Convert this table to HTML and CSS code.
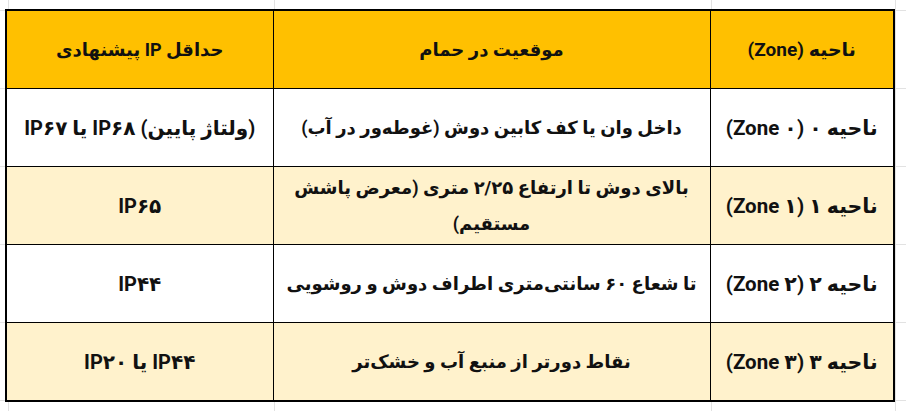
FILE: index.html
```html
<!DOCTYPE html>
<html lang="fa" dir="rtl">
<head>
<meta charset="utf-8">
<link rel="stylesheet" href="styles.css">
</head>
<body>
<div class="sheet">
<table class="zones">
  <colgroup>
    <col class="c-zone">
    <col class="c-loc">
    <col class="c-ip">
  </colgroup>
  <thead>
    <tr class="head">
      <th class="zone">ناحیه (Zone)</th>
      <th class="loc">موقعیت در حمام</th>
      <th class="ip">حداقل IP پیشنهادی</th>
    </tr>
  </thead>
  <tbody>
    <tr class="odd">
      <td class="zone">ناحیه ۰ (Zone ۰)</td>
      <td class="loc">داخل وان یا کف کابین دوش (غوطه‌ور در آب)</td>
      <td class="ip">(ولتاژ پایین) IP۶۸ یا IP۶۷</td>
    </tr>
    <tr class="even">
      <td class="zone">ناحیه ۱ (Zone ۱)</td>
      <td class="loc">بالای دوش تا ارتفاع ۲/۲۵ متری (معرض پاشش مستقیم)</td>
      <td class="ip">IP۶۵</td>
    </tr>
    <tr class="odd">
      <td class="zone">ناحیه ۲ (Zone ۲)</td>
      <td class="loc">تا شعاع ۶۰ سانتی‌متری اطراف دوش و روشویی</td>
      <td class="ip">IP۴۴</td>
    </tr>
    <tr class="even">
      <td class="zone">ناحیه ۳ (Zone ۳)</td>
      <td class="loc">نقاط دورتر از منبع آب و خشک‌تر</td>
      <td class="ip">IP۴۴ یا IP۲۰</td>
    </tr>
  </tbody>
</table>
</div>
</body>
</html>
```
FILE: styles.css
```css
html, body {
  margin: 0;
  padding: 0;
  background: #ffffff;
}

body {
  width: 906px;
  height: 411px;
  overflow: hidden;
  background-image:
    linear-gradient(to right, transparent 8px, #e2e2e2 8px, #e2e2e2 9px, transparent 9px),
    linear-gradient(to right, transparent 274px, #e2e2e2 274px, #e2e2e2 275px, transparent 275px),
    linear-gradient(to right, transparent 711px, #e2e2e2 711px, #e2e2e2 712px, transparent 712px),
    linear-gradient(to right, transparent 895px, #e2e2e2 895px, #e2e2e2 896px, transparent 896px),
    linear-gradient(to bottom, transparent 10px, #e2e2e2 10px, #e2e2e2 11px, transparent 11px),
    linear-gradient(to bottom, transparent 88px, #e2e2e2 88px, #e2e2e2 89px, transparent 89px),
    linear-gradient(to bottom, transparent 166px, #e2e2e2 166px, #e2e2e2 167px, transparent 167px),
    linear-gradient(to bottom, transparent 244px, #e2e2e2 244px, #e2e2e2 245px, transparent 245px),
    linear-gradient(to bottom, transparent 322px, #e2e2e2 322px, #e2e2e2 323px, transparent 323px),
    linear-gradient(to bottom, transparent 400px, #e2e2e2 400px, #e2e2e2 401px, transparent 401px);
}

.sheet {
  padding: 9px 11px 0 7px;
}

.zones {
  border-collapse: collapse;
  table-layout: fixed;
  width: 888px;
  border: 2px solid #000;
  font-family: Roboto, "DejaVu Sans", sans-serif;
  font-weight: bold;
  font-size: 18px;
  color: #111;
}

.c-zone { width: 184px; }
.c-loc { width: 437px; }
.c-ip { width: 267px; }

.zones th,
.zones td {
  border: 1px solid #000;
  height: 77px;
  padding: 0 6px;
  text-align: center;
  vertical-align: middle;
  line-height: 36px;
}

.zones td.zone { font-size: 20.5px; }
.zones td.ip { font-size: 20px; }
.zones th.zone { font-size: 19px; }

.head th { background: #ffc000; }
.odd td { background: #ffffff; }
.even td { background: #fff2cc; }
```
